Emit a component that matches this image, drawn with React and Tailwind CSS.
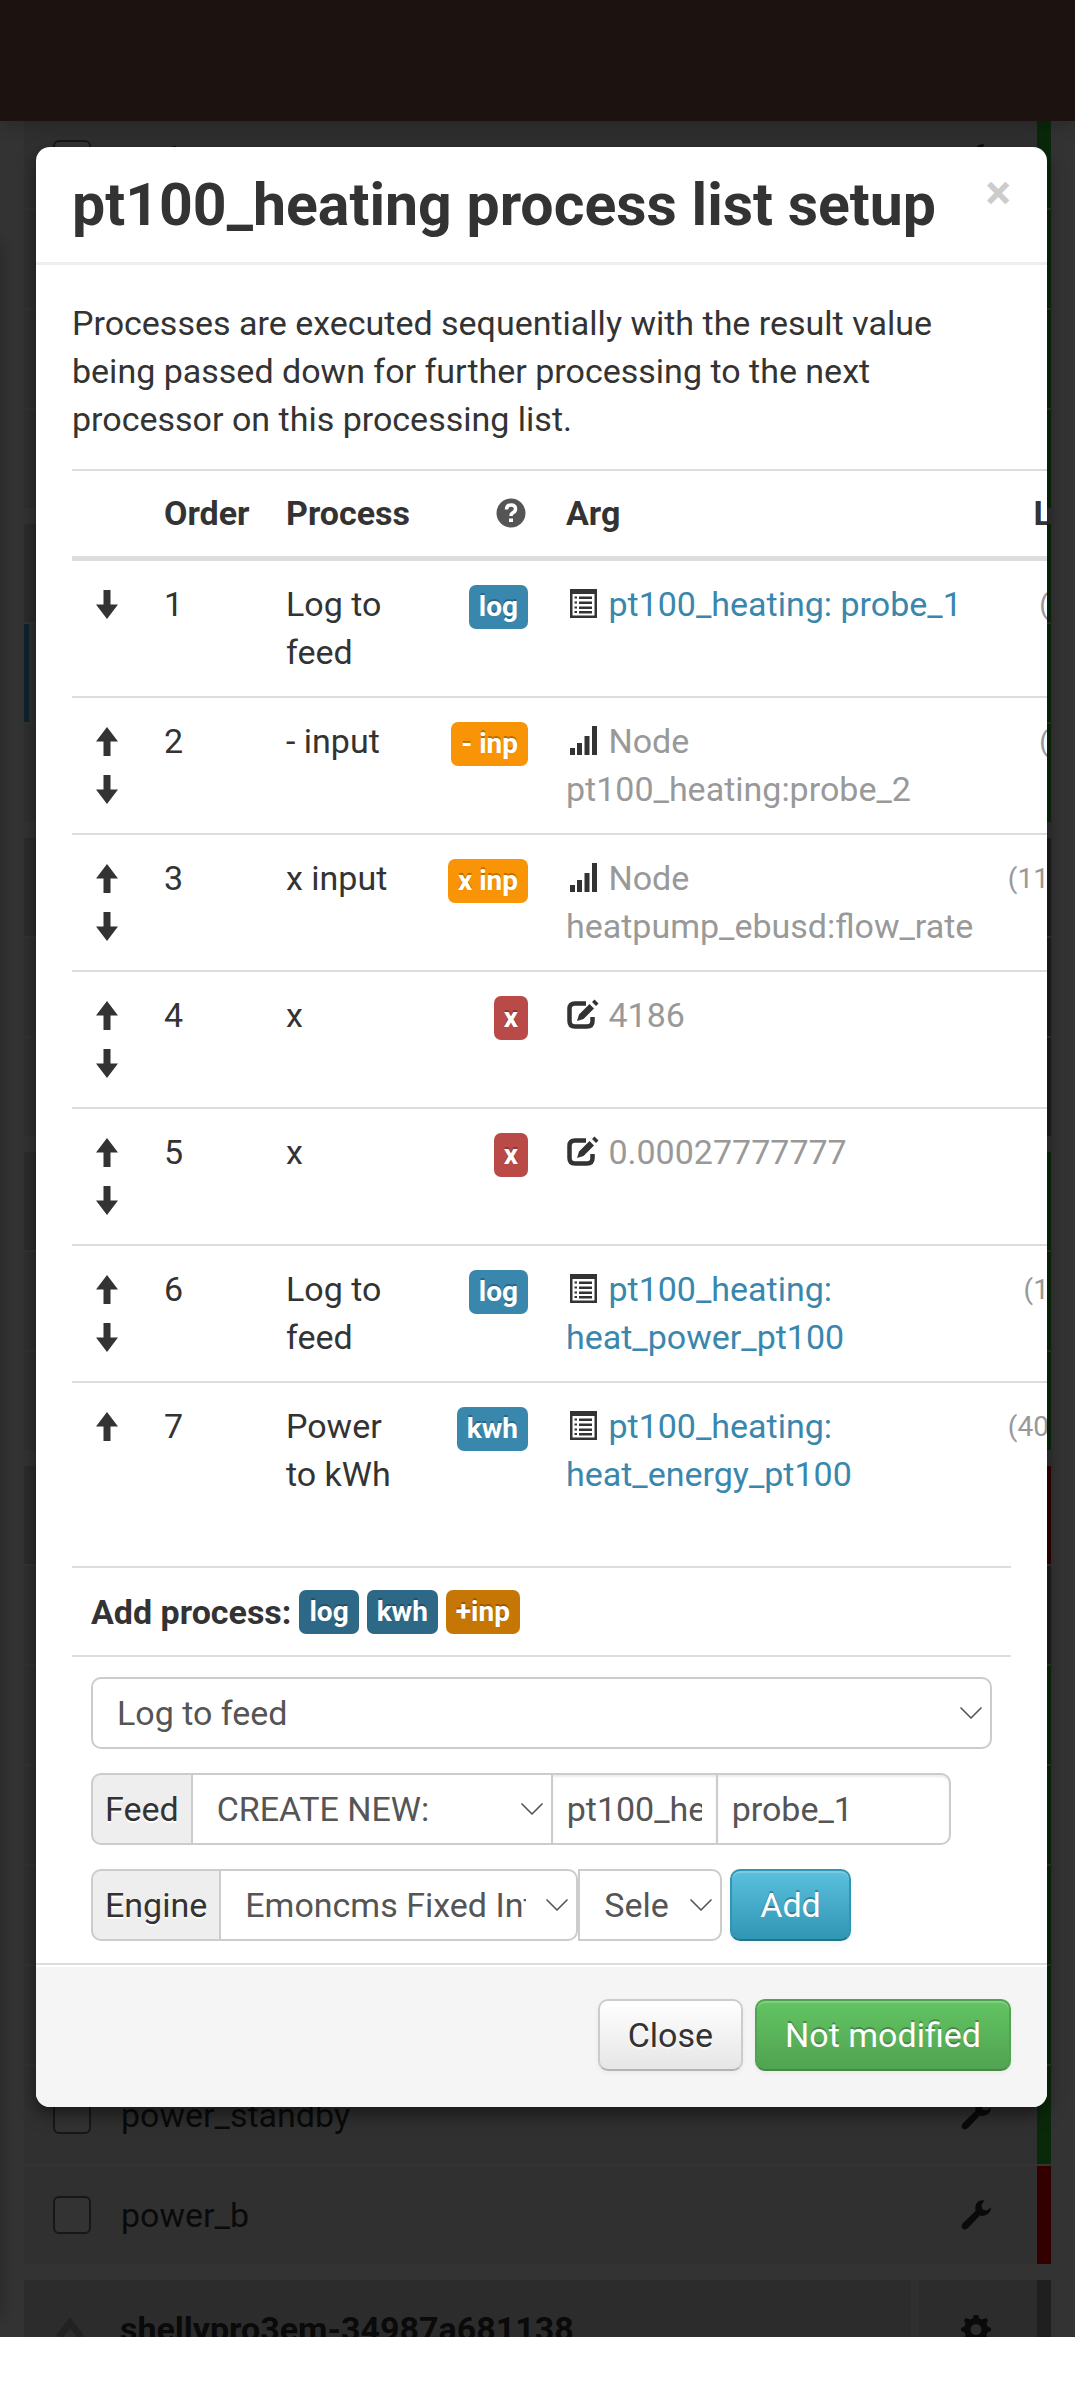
import { ChevronDown } from "lucide-react";

const inputs = [
  {
    rows: [{ name: "ev_heat", status: "ok" }, { status: "ok" }, { status: "ok" }, { status: "ok" }],
  },
  {
    status: "ok",
    rows: [{ status: "ok", selected: true }, { status: "ok" }],
  },
  {
    status: "none",
    rows: [{ status: "none" }, { status: "none" }],
  },
  {
    status: "ok",
    rows: [{ status: "ok" }, { status: "ok" }],
  },
  {
    status: "bad",
    rows: [
      { status: "none" },
      { status: "ok" },
      { status: "ok" },
      { status: "ok" },
      { status: "ok" },
      { name: "power_standby", status: "ok" },
      { name: "power_b", status: "bad" },
    ],
  },
  { title: "shellypro3em-34987a681138", status: "none", rows: [] },
];

const processes = [
  { name: "Log to feed", label: "log", tone: "info", icon: "feed", arg: "pt100_heating: probe_1", latest: "(29.31)" },
  { name: "- input", label: "- inp", tone: "warning", icon: "input", arg: "Node pt100_heating:probe_2", latest: "(27.84)" },
  { name: "x input", label: "x inp", tone: "warning", icon: "input", arg: "Node heatpump_ebusd:flow_rate", latest: "(1142.00)" },
  { name: "x", label: "x", tone: "danger", icon: "value", arg: "4186", latest: "" },
  { name: "x", label: "x", tone: "danger", icon: "value", arg: "0.00027777777", latest: "" },
  { name: "Log to feed", label: "log", tone: "info", icon: "feed", arg: "pt100_heating: heat_power_pt100", latest: "(195.12)" },
  { name: "Power to kWh", label: "kwh", tone: "info", icon: "feed", arg: "pt100_heating: heat_energy_pt100", latest: "(4062.75)" },
];

const strips = {
  ok: "bg-[#32cd32]",
  bad: "bg-[#ff0000]",
  none: "bg-[#999999]",
};

const tones = {
  info: "bg-[#3a87ad]",
  warning: "bg-[#f89406]",
  danger: "bg-[#b94a48]",
  infoDark: "bg-[#2d6987]",
  warningDark: "bg-[#c67605]",
};

function Icon({ children }) {
  return (
    <svg viewBox="0 0 34 34" className="inline-block size-[34px] fill-[#333] align-[-5px]" aria-hidden="true">
      {children}
    </svg>
  );
}

function ArrowUp() {
  return (
    <Icon>
      <path d="M17 2 L28 16.500 H20.500 V31 H13.500 V16.500 H6 Z" />
    </Icon>
  );
}

function ArrowDown() {
  return (
    <Icon>
      <path d="M13.500 2 H20.500 V16.500 H28 L17 31 L6 16.500 H13.500 Z" />
    </Icon>
  );
}

function ArgIcon({ type }) {
  if (type === "feed") {
    return (
      <Icon>
        <path
          fillRule="evenodd"
          d="M4 2 H31 V31 H4 Z M6.500 7 V28.500 H28.500 V7 Z M8.500 9.500 H11 V11.500 H8.500 Z M8.500 14.500 H11 V16.500 H8.500 Z M8.500 19.500 H11 V21.500 H8.500 Z M8.500 24 H11 V26 H8.500 Z M13 9.500 H26 V12 H13 Z M13 14.500 H26 V17 H13 Z M13 19.500 H26 V22 H13 Z M13 24 H26 V26.500 H13 Z"
        />
      </Icon>
    );
  }
  if (type === "input") {
    return (
      <Icon>
        <path d="M4 24 H9 V31 H4 Z M11 19 H16 V31 H11 Z M18.500 12 H23.500 V31 H18.500 Z M26 2 H31 V31 H26 Z" />
      </Icon>
    );
  }
  return (
    <Icon>
      <path
        d="M20 5.500 H9 Q3.500 5.500 3.500 11 V23 Q3.500 28.500 9 28.500 H21 Q26.500 28.500 26.500 23 V19"
        fill="none"
        stroke="#333"
        strokeWidth="4.500"
      />
      <path d="M11 23 L13 16.500 L23.500 6 L28 10.500 L17.500 21 Z M26 4 L28.500 1.500 L32.500 5.500 L30 8 Z" />
    </Icon>
  );
}

function Wrench() {
  return (
    <Icon>
      <path d="M25.500 2.500 L22.500 7 L23.500 11.500 L27.500 12.500 L32 9.500 Q32 15 27 17 Q23.500 18.500 21 17.500 L9 30 Q6 32.500 3.500 30.500 Q1.500 28 4 25 L16.500 13 Q15.500 7.500 18 4.500 Q21 1.500 25.500 2.500 Z" />
    </Icon>
  );
}

function Cog() {
  return (
    <Icon>
      <path
        fillRule="evenodd"
        d="M15 3 H19 L20.500 6.500 L23 7.500 L27 6 L29 8 L27.500 12 L28.500 14.500 L32 16 V19 L28.500 20.500 L27.500 23 L29 27 L27 29 L23 27.500 L20.500 28.500 L19 32 H15 L13.500 28.500 L11 27.500 L7 29 L5 27 L6.500 23 L5.500 20.500 L2 19 V16 L5.500 14.500 L6.500 12 L5 8 L7 6 L11 7.500 L13.500 6.500 Z M17 12 A5.500 5.500 0 1 0 17 23 A5.500 5.500 0 1 0 17 12 Z"
      />
    </Icon>
  );
}

function Badge({ tone, children }) {
  return (
    <span
      className={`inline-block rounded-[7px] px-[10px] py-[5px] text-[28px] leading-[34px] font-bold whitespace-nowrap text-white [text-shadow:0_-2px_0_rgba(0,0,0,0.25)] ${tones[tone]}`}
    >
      {children}
    </span>
  );
}

function Select({ label, className = "", selectClass = "", options }) {
  return (
    <div className={`relative ${className}`}>
      <select
        aria-label={label}
        className={`block h-[72px] w-full appearance-none overflow-hidden border-2 border-[#ccc] bg-white pr-[50px] pl-6 text-[#555] ${selectClass}`}
      >
        {options.map((option) => (
          <option key={option}>{option}</option>
        ))}
      </select>
      <ChevronDown
        className="pointer-events-none absolute top-4 right-px size-10 text-[#555]"
        strokeWidth={1}
      />
    </div>
  );
}

function InputRow({ row }) {
  return (
    <div
      className={`flex h-[98px] items-center bg-[#f0f0f0] ${row.selected ? "border-l-5 border-[#44b3e2]" : ""}`}
    >
      <input
        type="checkbox"
        aria-label={row.name ?? "Input"}
        className="ml-[29px] size-[38px] appearance-none rounded-[6px] border-2 border-[#767676] bg-white"
      />
      <span className="ml-[30px] flex-1">{row.name}</span>
      <Wrench />
      <span className={`ml-11 w-[14px] self-stretch ${strips[row.status]}`} />
    </div>
  );
}

function InputGroup({ group }) {
  return (
    <section className="flex flex-col gap-[2px]">
      {group.status && (
        <div className="flex h-[98px] items-center bg-[#dcdcdc]">
          <svg viewBox="0 0 28 28" className="ml-8 size-7 shrink-0" aria-hidden="true">
            <path d="M3 22 L14 8 L25 22" fill="none" stroke="#aaa" strokeWidth="7" />
          </svg>
          <strong className="ml-9 flex-1">{group.title}</strong>
          <span className="mr-10 w-2 self-stretch bg-[#f0f0f0]" />
          <Cog />
          <span className={`ml-11 w-[14px] self-stretch ${strips[group.status]}`} />
        </div>
      )}
      {group.rows.map((row, i) => (
        <InputRow key={i} row={row} />
      ))}
    </section>
  );
}

function ProcessTable() {
  return (
    <table className="w-[1076px] table-fixed border-collapse">
      <colgroup>
        <col className="w-[73px]" />
        <col className="w-[122px]" />
        <col className="w-[148px]" />
        <col className="w-[132px]" />
        <col className="w-[440px]" />
        <col />
      </colgroup>
      <thead>
        <tr className="h-[88px] border-t-2 border-[#ddd] text-left">
          <th />
          <th className="px-[19px]">Order</th>
          <th className="pl-[19px]">Process</th>
          <th className="px-[19px] text-right">
            <svg viewBox="0 0 34 34" className="inline-block size-[34px] align-[-5px]" aria-label="Help">
              <circle cx="17" cy="17" r="14.500" fill="#555" />
              <path
                d="M12.500 13.500 Q12.500 9 17 9 Q21.500 9 21.500 13 Q21.500 15.500 18.500 17 Q17 18 17 20"
                fill="none"
                stroke="#fff"
                strokeWidth="3.500"
              />
              <path d="M15 22.500 H19 V26 H15 Z" fill="#fff" />
            </svg>
          </th>
          <th className="px-[19px]">Arg</th>
          <th className="pr-[19px] text-right">Latest</th>
        </tr>
      </thead>
      <tbody className="border-t-5 border-[#ddd]">
        {processes.map((process, i) => (
          <tr key={i} className="h-[137px] border-[#ddd] align-top first:h-[139px] not-first:border-t-2">
            <td className="pt-5 pl-[18px]">
              <div className="flex flex-col">
                {i > 0 && (
                  <button type="button" aria-label="Move up" className="flex h-12 items-center">
                    <ArrowUp />
                  </button>
                )}
                {i < processes.length - 1 && (
                  <button type="button" aria-label="Move down" className="flex h-12 items-center">
                    <ArrowDown />
                  </button>
                )}
              </div>
            </td>
            <td className="px-[19px] pt-[19px]">{i + 1}</td>
            <td className="px-[19px] pt-[19px]">{process.name}</td>
            <td className="pt-[19px] pr-[19px] text-right">
              <Badge tone={process.tone}>{process.label}</Badge>
            </td>
            <td className="px-[19px] pt-[19px]">
              <ArgIcon type={process.icon} />{" "}
              {process.icon === "feed" ? (
                <a href="#feed" className="text-[#3a87ad]">
                  {process.arg}
                </a>
              ) : (
                <span className="text-[#999]">{process.arg}</span>
              )}
            </td>
            <td className="pt-5 pr-[19px] text-right text-[28px] text-[#999]">{process.latest}</td>
          </tr>
        ))}
      </tbody>
    </table>
  );
}

function AddProcess() {
  return (
    <div className="mt-[47px]">
      <div className="flex items-center gap-2 border-y-2 border-[#ddd] px-[19px] pt-[22px] pb-[21px]">
        <strong className="leading-[44px]">Add process:</strong>
        <Badge tone="infoDark">log</Badge>
        <Badge tone="infoDark">kwh</Badge>
        <Badge tone="warningDark">+inp</Badge>
      </div>

      <form className="flex flex-col gap-6 px-[19px] pt-5 pb-[22px]">
        <Select label="Process" selectClass="rounded-[10px]" options={["Log to feed", "Power to kWh"]} />

        <div className="flex">
          <span className="rounded-l-[10px] border-2 border-r-0 border-[#ccc] bg-[#eee] px-3 py-[10px] [text-shadow:0_2px_0_#fff]">
            Feed
          </span>
          <Select label="Feed" className="w-[362px]" options={["CREATE NEW:"]} />
          <input
            aria-label="Feed tag"
            defaultValue="pt100_heating"
            className="-ml-[2px] h-[72px] w-[167px] border-2 border-[#ccc] bg-white px-[14px] text-[#555] shadow-[inset_0_2px_2px_rgba(0,0,0,0.075)]"
          />
          <input
            aria-label="Feed name"
            defaultValue="probe_1"
            className="-ml-[2px] h-[72px] w-[235px] rounded-r-[10px] border-2 border-[#ccc] bg-white px-[14px] text-[#555] shadow-[inset_0_2px_2px_rgba(0,0,0,0.075)]"
          />
        </div>

        <div className="flex">
          <span className="rounded-l-[10px] border-2 border-r-0 border-[#ccc] bg-[#eee] px-3 py-[10px] [text-shadow:0_2px_0_#fff]">
            Engine
          </span>
          <Select
            label="Engine"
            className="w-[359px]"
            selectClass="rounded-r-[10px]"
            options={["Emoncms Fixed Interval TimeSeries"]}
          />
          <Select label="Interval" className="w-36" selectClass="rounded-r-[10px]" options={["Select interval"]} />
          <button
            type="button"
            className="ml-2 h-[72px] rounded-[10px] border-2 border-[#2f96b4] border-b-[#24748c] bg-linear-to-b from-[#5bc0de] to-[#2f96b4] px-7 text-white shadow-[inset_0_2px_0_rgba(255,255,255,0.2),0_2px_5px_rgba(0,0,0,0.05)] [text-shadow:0_-2px_0_rgba(0,0,0,0.25)]"
          >
            Add
          </button>
        </div>
      </form>
    </div>
  );
}

export default function App() {
  return (
    <div className="bg-white pb-[58px] font-['Roboto',sans-serif] text-[34px] leading-12 text-[#333]">
      <div className="relative overflow-hidden">
        {/* input list behind the dialog */}
        <div className="absolute inset-0 overflow-hidden" inert>
          <nav className="absolute inset-x-0 top-0 z-10 h-[121px] bg-[#8c5a50] shadow-[0_2px_24px_rgba(0,0,0,0.3)]" />
          <aside className="absolute top-60 bottom-5 -left-2 w-2 shadow-[0_0_16px_rgba(0,0,0,0.4)]" />
          <main className="flex flex-col gap-4 px-6 pt-[110px]">
            {inputs.map((group, i) => (
              <InputGroup key={i} group={group} />
            ))}
          </main>
        </div>
        <div className="absolute inset-0 z-20 bg-black/80" />

        <div className="relative z-30 pt-[147px] pr-7 pb-[230px] pl-9">
          <div
            role="dialog"
            aria-labelledby="dialog-title"
            className="overflow-hidden rounded-[14px] bg-white shadow-[0_7px_17px_rgba(0,0,0,0.5)]"
          >
            <header className="flex items-start justify-between border-b-3 border-[#eee] px-9 pt-[22px] pb-[21px]">
              <h3 id="dialog-title" className="text-[59px] leading-[72px] font-bold">
                pt100_heating process list setup
              </h3>
              <button type="button" aria-label="Close" className="text-[48px] leading-[48px] font-bold text-[#ccc]">
                ×
              </button>
            </header>

            <div className="overflow-hidden px-9 pt-[34px]">
              <p className="mb-[26px]">
                Processes are executed sequentially with the result value being passed down for further processing to
                the next processor on this processing list.
              </p>
              <ProcessTable />
              <AddProcess />
            </div>

            <footer className="flex justify-end gap-3 border-t-2 border-[#ddd] bg-[#f5f5f5] px-9 pt-[34px] pb-9 shadow-[inset_0_2px_0_#fff]">
              <button
                type="button"
                className="h-[72px] rounded-[10px] border-2 border-[#ccc] border-b-[#b3b3b3] bg-linear-to-b from-white to-[#e6e6e6] px-7 shadow-[0_2px_5px_rgba(0,0,0,0.05)] [text-shadow:0_2px_2px_rgba(255,255,255,0.75)]"
              >
                Close
              </button>
              <button
                type="button"
                className="h-[72px] rounded-[10px] border-2 border-[#51a351] border-b-[#458b45] bg-linear-to-b from-[#62c462] to-[#51a351] px-7 text-white shadow-[inset_0_2px_0_rgba(255,255,255,0.2),0_2px_5px_rgba(0,0,0,0.05)] [text-shadow:0_-2px_0_rgba(0,0,0,0.25)]"
              >
                Not modified
              </button>
            </footer>
          </div>
        </div>
      </div>
    </div>
  );
}
